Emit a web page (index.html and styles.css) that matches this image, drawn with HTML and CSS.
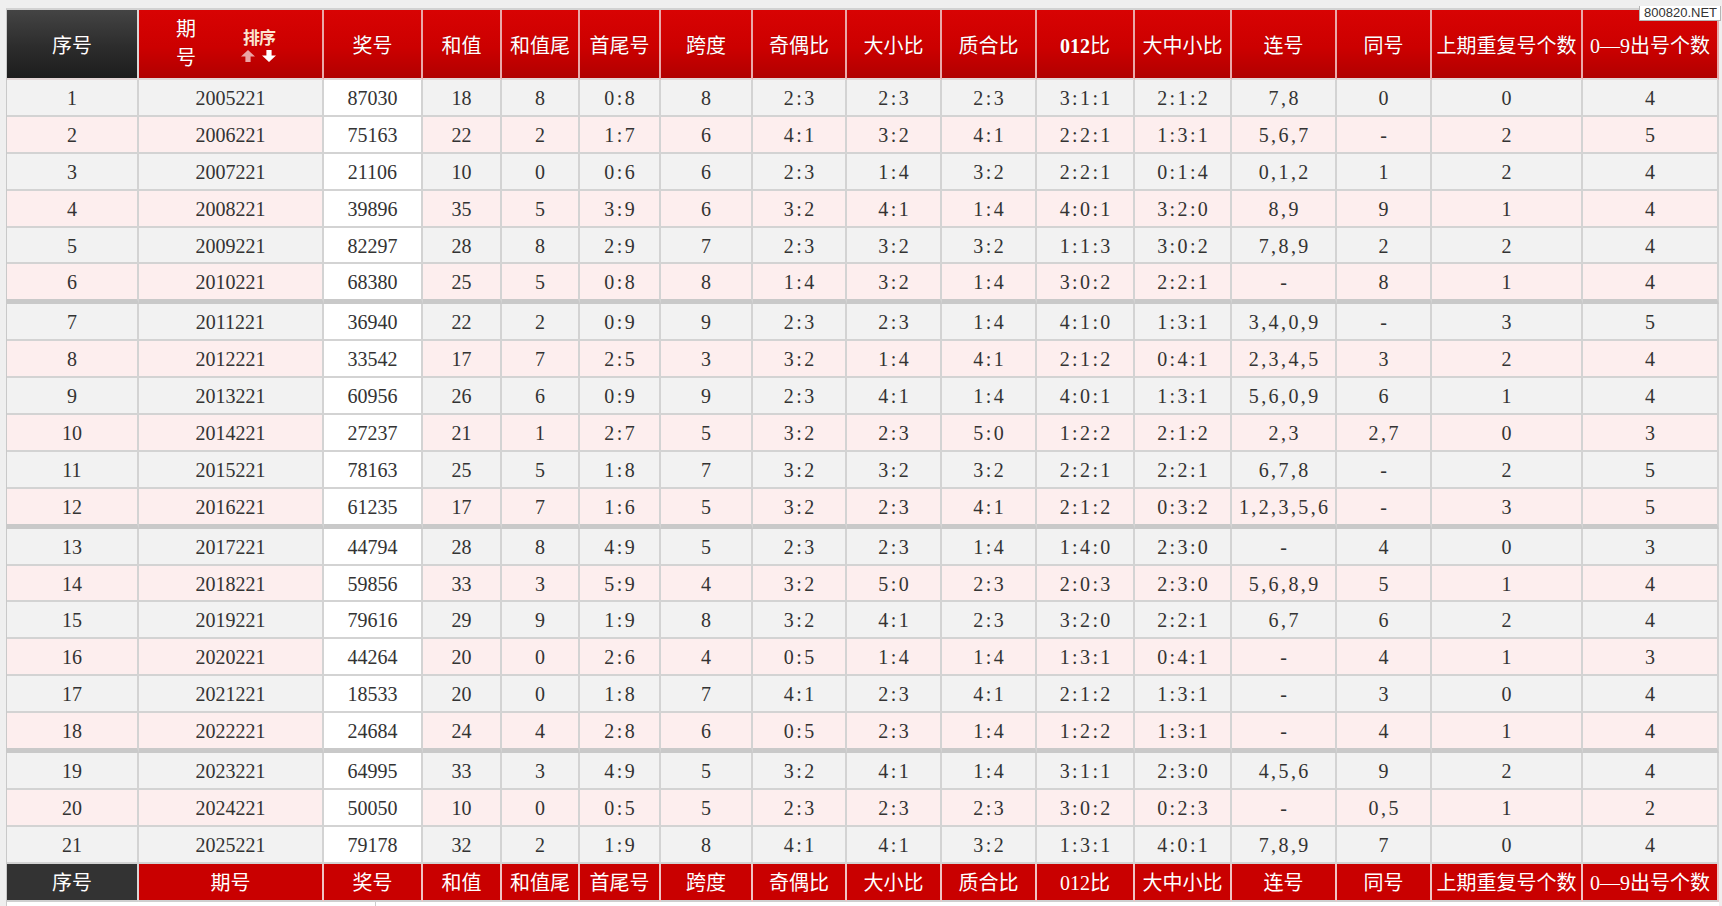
FILE: index.html
```html
<!DOCTYPE html>
<html lang="zh-CN">
<head>
<meta charset="utf-8">
<title>排列五 走势</title>
<link rel="stylesheet" href="styles.css">
</head>
<body>
<div class="page">
  <div class="watermark">800820.NET</div>
  <table class="lottery">
    <colgroup>
      <col class="c-idx"><col class="c-issue"><col class="c-num"><col class="c-sum"><col class="c-tail">
      <col class="c-ht"><col class="c-span"><col class="c-r1"><col class="c-r2"><col class="c-r3">
      <col class="c-012"><col class="c-dzx"><col class="c-lian"><col class="c-tong"><col class="c-rep"><col class="c-cnt">
    </colgroup>
    <thead>
      <tr>
        <th class="th-dark">序号</th>
        <th class="th-issue">
          <div class="issue-wrap">
            <span class="issue-label">期号</span>
            <span class="sort">
              <span class="sort-text">排序</span>
              <svg class="sort-arrows" viewBox="0 0 36 12" width="36" height="12" aria-hidden="true">
                <polygon points="0,6.5 7,0 14,6.5 9.6,6.5 9.6,12 4.4,12 4.4,6.5" fill="#eba3a3"/>
                <polygon points="25.4,0 30.6,0 30.6,5.5 35,5.5 28,12 21,5.5 25.4,5.5" fill="#ffffff"/>
              </svg>
            </span>
          </div>
        </th>
        <th>奖号</th><th>和值</th><th>和值尾</th><th>首尾号</th><th>跨度</th><th>奇偶比</th><th>大小比</th><th>质合比</th><th><b class="hd-num">012</b>比</th><th>大中小比</th><th>连号</th><th>同号</th><th>上期重复号个数</th><th>0—9出号个数</th>
      </tr>
    </thead>
    <tbody>
      <tr class="odd"><td>1</td><td>2005221</td><td class="num">87030</td><td>18</td><td>8</td><td>0:8</td><td>8</td><td>2:3</td><td>2:3</td><td>2:3</td><td>3:1:1</td><td>2:1:2</td><td>7,8</td><td>0</td><td>0</td><td>4</td></tr>
      <tr class="even"><td>2</td><td>2006221</td><td class="num">75163</td><td>22</td><td>2</td><td>1:7</td><td>6</td><td>4:1</td><td>3:2</td><td>4:1</td><td>2:2:1</td><td>1:3:1</td><td>5,6,7</td><td>-</td><td>2</td><td>5</td></tr>
      <tr class="odd"><td>3</td><td>2007221</td><td class="num">21106</td><td>10</td><td>0</td><td>0:6</td><td>6</td><td>2:3</td><td>1:4</td><td>3:2</td><td>2:2:1</td><td>0:1:4</td><td>0,1,2</td><td>1</td><td>2</td><td>4</td></tr>
      <tr class="even"><td>4</td><td>2008221</td><td class="num">39896</td><td>35</td><td>5</td><td>3:9</td><td>6</td><td>3:2</td><td>4:1</td><td>1:4</td><td>4:0:1</td><td>3:2:0</td><td>8,9</td><td>9</td><td>1</td><td>4</td></tr>
      <tr class="odd"><td>5</td><td>2009221</td><td class="num">82297</td><td>28</td><td>8</td><td>2:9</td><td>7</td><td>2:3</td><td>3:2</td><td>3:2</td><td>1:1:3</td><td>3:0:2</td><td>7,8,9</td><td>2</td><td>2</td><td>4</td></tr>
      <tr class="even sep"><td>6</td><td>2010221</td><td class="num">68380</td><td>25</td><td>5</td><td>0:8</td><td>8</td><td>1:4</td><td>3:2</td><td>1:4</td><td>3:0:2</td><td>2:2:1</td><td>-</td><td>8</td><td>1</td><td>4</td></tr>
      <tr class="odd"><td>7</td><td>2011221</td><td class="num">36940</td><td>22</td><td>2</td><td>0:9</td><td>9</td><td>2:3</td><td>2:3</td><td>1:4</td><td>4:1:0</td><td>1:3:1</td><td>3,4,0,9</td><td>-</td><td>3</td><td>5</td></tr>
      <tr class="even"><td>8</td><td>2012221</td><td class="num">33542</td><td>17</td><td>7</td><td>2:5</td><td>3</td><td>3:2</td><td>1:4</td><td>4:1</td><td>2:1:2</td><td>0:4:1</td><td>2,3,4,5</td><td>3</td><td>2</td><td>4</td></tr>
      <tr class="odd"><td>9</td><td>2013221</td><td class="num">60956</td><td>26</td><td>6</td><td>0:9</td><td>9</td><td>2:3</td><td>4:1</td><td>1:4</td><td>4:0:1</td><td>1:3:1</td><td>5,6,0,9</td><td>6</td><td>1</td><td>4</td></tr>
      <tr class="even"><td>10</td><td>2014221</td><td class="num">27237</td><td>21</td><td>1</td><td>2:7</td><td>5</td><td>3:2</td><td>2:3</td><td>5:0</td><td>1:2:2</td><td>2:1:2</td><td>2,3</td><td>2,7</td><td>0</td><td>3</td></tr>
      <tr class="odd"><td>11</td><td>2015221</td><td class="num">78163</td><td>25</td><td>5</td><td>1:8</td><td>7</td><td>3:2</td><td>3:2</td><td>3:2</td><td>2:2:1</td><td>2:2:1</td><td>6,7,8</td><td>-</td><td>2</td><td>5</td></tr>
      <tr class="even sep"><td>12</td><td>2016221</td><td class="num">61235</td><td>17</td><td>7</td><td>1:6</td><td>5</td><td>3:2</td><td>2:3</td><td>4:1</td><td>2:1:2</td><td>0:3:2</td><td>1,2,3,5,6</td><td>-</td><td>3</td><td>5</td></tr>
      <tr class="odd"><td>13</td><td>2017221</td><td class="num">44794</td><td>28</td><td>8</td><td>4:9</td><td>5</td><td>2:3</td><td>2:3</td><td>1:4</td><td>1:4:0</td><td>2:3:0</td><td>-</td><td>4</td><td>0</td><td>3</td></tr>
      <tr class="even"><td>14</td><td>2018221</td><td class="num">59856</td><td>33</td><td>3</td><td>5:9</td><td>4</td><td>3:2</td><td>5:0</td><td>2:3</td><td>2:0:3</td><td>2:3:0</td><td>5,6,8,9</td><td>5</td><td>1</td><td>4</td></tr>
      <tr class="odd"><td>15</td><td>2019221</td><td class="num">79616</td><td>29</td><td>9</td><td>1:9</td><td>8</td><td>3:2</td><td>4:1</td><td>2:3</td><td>3:2:0</td><td>2:2:1</td><td>6,7</td><td>6</td><td>2</td><td>4</td></tr>
      <tr class="even"><td>16</td><td>2020221</td><td class="num">44264</td><td>20</td><td>0</td><td>2:6</td><td>4</td><td>0:5</td><td>1:4</td><td>1:4</td><td>1:3:1</td><td>0:4:1</td><td>-</td><td>4</td><td>1</td><td>3</td></tr>
      <tr class="odd"><td>17</td><td>2021221</td><td class="num">18533</td><td>20</td><td>0</td><td>1:8</td><td>7</td><td>4:1</td><td>2:3</td><td>4:1</td><td>2:1:2</td><td>1:3:1</td><td>-</td><td>3</td><td>0</td><td>4</td></tr>
      <tr class="even sep"><td>18</td><td>2022221</td><td class="num">24684</td><td>24</td><td>4</td><td>2:8</td><td>6</td><td>0:5</td><td>2:3</td><td>1:4</td><td>1:2:2</td><td>1:3:1</td><td>-</td><td>4</td><td>1</td><td>4</td></tr>
      <tr class="odd"><td>19</td><td>2023221</td><td class="num">64995</td><td>33</td><td>3</td><td>4:9</td><td>5</td><td>3:2</td><td>4:1</td><td>1:4</td><td>3:1:1</td><td>2:3:0</td><td>4,5,6</td><td>9</td><td>2</td><td>4</td></tr>
      <tr class="even"><td>20</td><td>2024221</td><td class="num">50050</td><td>10</td><td>0</td><td>0:5</td><td>5</td><td>2:3</td><td>2:3</td><td>2:3</td><td>3:0:2</td><td>0:2:3</td><td>-</td><td>0,5</td><td>1</td><td>2</td></tr>
      <tr class="odd"><td>21</td><td>2025221</td><td class="num">79178</td><td>32</td><td>2</td><td>1:9</td><td>8</td><td>4:1</td><td>4:1</td><td>3:2</td><td>1:3:1</td><td>4:0:1</td><td>7,8,9</td><td>7</td><td>0</td><td>4</td></tr>
    </tbody>
    <tfoot>
      <tr>
        <td class="tf-dark">序号</td><td>期号</td><td>奖号</td><td>和值</td><td>和值尾</td><td>首尾号</td><td>跨度</td><td>奇偶比</td><td>大小比</td><td>质合比</td><td>012比</td><td>大中小比</td><td>连号</td><td>同号</td><td>上期重复号个数</td><td>0—9出号个数</td>
      </tr>
    </tfoot>
  </table>
  <div class="next-block">
    <div class="next-cell"></div>
  </div>
</div>
</body>
</html>
```

FILE: styles.css
```css
html, body {
  margin: 0;
  padding: 0;
}

body {
  background: #efefef;
  font-family: "Liberation Serif", "Noto Sans CJK SC", serif;
  color: #333333;
}

.page {
  position: relative;
  padding: 8px 0 0 6px;
}

.watermark {
  position: absolute;
  top: 6px;
  right: 1px;
  background: #ffffff;
  border: 1px solid #b5b5b5;
  border-top: none;
  padding: 0 3px 0 4px;
  font-family: "Liberation Sans", sans-serif;
  font-size: 13px;
  line-height: 14px;
  color: #333333;
  z-index: 2;
}

.lottery {
  border-collapse: separate;
  border-spacing: 0;
  table-layout: fixed;
  width: 1713px;
  border-left: 1px solid #c9c9c9;
  border-top: 2px solid #d2d2d2;
}

.c-idx { width: 132px; }
.c-issue { width: 185px; }
.c-num { width: 99px; }
.c-sum { width: 79px; }
.c-tail { width: 78px; }
.c-ht { width: 81px; }
.c-span { width: 92px; }
.c-r1 { width: 94px; }
.c-r2 { width: 95px; }
.c-r3 { width: 95px; }
.c-012 { width: 98px; }
.c-dzx { width: 97px; }
.c-lian { width: 105px; }
.c-tong { width: 95px; }
.c-rep { width: 151px; }
.c-cnt { width: 136px; }

.lottery th,
.lottery td {
  box-sizing: border-box;
  padding: 0;
  text-align: center;
  vertical-align: middle;
  white-space: nowrap;
  overflow: hidden;
}

/* header */
.lottery th {
  height: 70px;
  font-weight: normal;
  font-size: 20px;
  color: #ffffff;
  background: linear-gradient(#d80303 0%, #cc0000 55%, #b10000 100%);
  border-right: 2px solid #eaa8a8;
  border-bottom: 2px solid #e3d6d6;
  text-shadow: 0 0 1px rgba(80, 0, 0, 0.35);
}

.lottery th.th-dark {
  background: linear-gradient(#444444 0%, #2c2c2c 55%, #1d1d1d 100%);
  border-right-color: #d7d7d7;
}

.hd-num {
  font-weight: bold;
}

.issue-wrap {
  display: flex;
  align-items: center;
  justify-content: center;
  gap: 45px;
  padding-right: 8px;
}

.issue-label {
  display: block;
  width: 1em;
  white-space: normal;
  line-height: 29px;
  text-align: left;
}

.sort {
  display: flex;
  flex-direction: column;
  align-items: center;
  gap: 5px;
  margin-top: 3px;
}

.sort-text {
  font-family: "Noto Sans CJK SC", sans-serif;
  font-weight: bold;
  font-size: 17px;
  line-height: 16px;
  letter-spacing: -1px;
  color: #ffe3cf;
}

.sort-arrows {
  display: block;
}

/* body rows */
.lottery td {
  height: 36.9px;
  padding-top: 2px;
  font-size: 20px;
  color: #333333;
  border-right: 2px solid #d3d3d3;
  border-bottom: 2px solid #d3d3d3;
}

/* ratio and list columns: wider punctuation, like the original song typeface */
.lottery tbody td:nth-child(6),
.lottery tbody td:nth-child(8),
.lottery tbody td:nth-child(9),
.lottery tbody td:nth-child(10),
.lottery tbody td:nth-child(11),
.lottery tbody td:nth-child(12),
.lottery tbody td:nth-child(13),
.lottery tbody td:nth-child(14) {
  letter-spacing: 2.4px;
  padding-left: 2.4px;
}

.lottery tr.odd td {
  background: #f2f2f2;
}

.lottery tr.even td {
  background: #fdeeee;
}

.lottery tr td.num {
  background: #ffffff;
}

.lottery tr.sep td {
  height: 39.9px;
  border-bottom: 5px solid #c9c9c9;
}

/* footer */
.lottery tfoot td {
  height: 38px;
  padding-top: 0;
  color: #ffffff;
  background: #c90000;
  border-right: 2px solid #f0c4c4;
  border-bottom: 2px solid #cfcfcf;
}

.lottery tfoot td.tf-dark {
  background: #333333;
  border-right-color: #d7d7d7;
}

/* start of the next block below */
.next-block {
  display: flex;
  width: 1712px;
  height: 20px;
  background: #ffffff;
  border-left: 1px solid #c9c9c9;
}

.next-cell {
  width: 368px;
  border-right: 1px solid #cccccc;
}
```
